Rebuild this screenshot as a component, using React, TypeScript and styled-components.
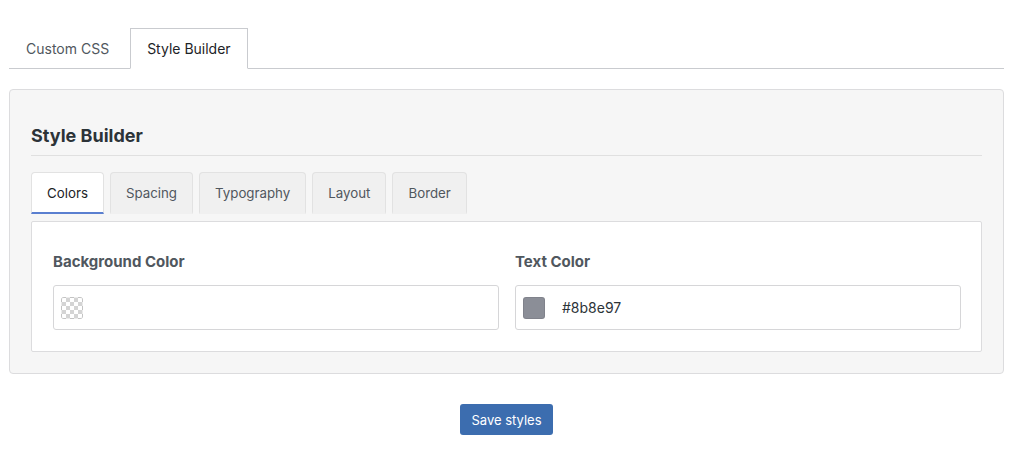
import React, { useState } from "react"
import styled, { createGlobalStyle } from "styled-components"

const Global = createGlobalStyle`
  html, body {
    margin: 0;
    padding: 0;
    background: #ffffff;
    font-family: Inter, "Liberation Sans", Arial, sans-serif;
    -webkit-font-smoothing: antialiased;
  }
`

const outerTabs = ["Custom CSS", "Style Builder"]
const innerTabs = ["Colors", "Spacing", "Typography", "Layout", "Border"]

export default function App() {
  const [outer, setOuter] = useState("Style Builder")
  const [inner, setInner] = useState("Colors")

  return (
    <>
      <Global />
      <Page>
        <TopTabs>
          {outerTabs.map((t) => (
            <TopTab key={t} active={outer === t} onClick={() => setOuter(t)}>
              {t}
            </TopTab>
          ))}
        </TopTabs>

        <Panel>
          <Heading>Style Builder</Heading>
          <SubTabs>
            {innerTabs.map((t) => (
              <SubTab key={t} active={inner === t} onClick={() => setInner(t)}>
                {t}
              </SubTab>
            ))}
          </SubTabs>
          <Content>
            <Field>
              <Label>Background Color</Label>
              <ColorInput>
                <Swatch transparent />
                <Value />
              </ColorInput>
            </Field>
            <Field>
              <Label>Text Color</Label>
              <ColorInput>
                <Swatch color="#8b8e97" />
                <Value>#8b8e97</Value>
              </ColorInput>
            </Field>
          </Content>
        </Panel>

        <Actions>
          <SaveButton>Save styles</SaveButton>
        </Actions>
      </Page>
    </>
  )
}

const Page = styled.div`
  padding: 28px 20px 0 9px;
`

const TopTabs = styled.div`
  display: flex;
  gap: 4px;
  border-bottom: 1px solid #c9cbcf;
`

const TopTab = styled.button<{ active?: boolean }>`
  height: 41px;
  padding: 0 16px;
  margin-bottom: -1px;
  font-family: inherit;
  font-size: 14px;
  color: ${(p) => (p.active ? "#1d2327" : "#50575e")};
  background: ${(p) => (p.active ? "#ffffff" : "transparent")};
  border: 1px solid ${(p) => (p.active ? "#c9cbcf" : "transparent")};
  border-bottom-color: ${(p) => (p.active ? "#ffffff" : "transparent")};
  cursor: pointer;
`

const Panel = styled.div`
  margin-top: 20px;
  padding: 21px;
  background: #f6f6f6;
  border: 1px solid #dcdcde;
  border-radius: 4px;
`

const Heading = styled.h2`
  margin: 0;
  padding: 14px 0 9px;
  font-size: 18px;
  font-weight: 700;
  color: #2c3338;
  border-bottom: 1px solid #e0e0e0;
`

const SubTabs = styled.div`
  display: flex;
  gap: 6px;
  margin-top: 16px;
`

const SubTab = styled.button<{ active?: boolean }>`
  height: 42px;
  padding: 0 15px;
  font-family: inherit;
  font-size: 13.3px;
  color: ${(p) => (p.active ? "#1d2327" : "#50575e")};
  background: ${(p) => (p.active ? "#ffffff" : "#f0f0f0")};
  border: 1px solid #e2e2e2;
  border-bottom: 2px solid ${(p) => (p.active ? "#5a7fd0" : "transparent")};
  border-radius: 4px 4px 0 0;
  cursor: pointer;
`

const Content = styled.div`
  display: grid;
  grid-template-columns: 1fr 1fr;
  gap: 16px;
  margin-top: 7px;
  padding: 30px 20px 21px 21px;
  background: #ffffff;
  border: 1px solid #dcdcde;
  border-radius: 2px;
`

const Field = styled.div`
  display: flex;
  flex-direction: column;
`

const Label = styled.div`
  font-size: 15px;
  font-weight: 700;
  color: #50575e;
  margin-bottom: 14px;
`

const ColorInput = styled.div`
  display: flex;
  align-items: center;
  gap: 17px;
  height: 45px;
  box-sizing: border-box;
  padding: 0 7px;
  border: 1px solid #d6d6d8;
  border-radius: 3px;
  background: #ffffff;
`

const Swatch = styled.span<{ color?: string; transparent?: boolean }>`
  width: 22px;
  height: 22px;
  flex: none;
  border-radius: 3px;
  box-sizing: border-box;
  border: 1px solid rgba(0, 0, 0, 0.08);
  background-color: ${(p) => (p.transparent ? "#ffffff" : p.color)};
  background-image: ${(p) =>
    p.transparent
      ? "linear-gradient(45deg, #d4d4d4 25%, transparent 25%, transparent 75%, #d4d4d4 75%), linear-gradient(45deg, #d4d4d4 25%, transparent 25%, transparent 75%, #d4d4d4 75%)"
      : "none"};
  background-size: 8px 8px;
  background-position: 0 0, 4px 4px;
`

const Value = styled.span`
  font-size: 14px;
  color: #2c3338;
`

const Actions = styled.div`
  display: flex;
  justify-content: center;
  margin-top: 30px;
`

const SaveButton = styled.button`
  height: 31px;
  padding: 0 11px;
  font-family: inherit;
  font-size: 13px;
  color: #ffffff;
  background: #3c6daf;
  border: none;
  border-radius: 3px;
  cursor: pointer;
`
